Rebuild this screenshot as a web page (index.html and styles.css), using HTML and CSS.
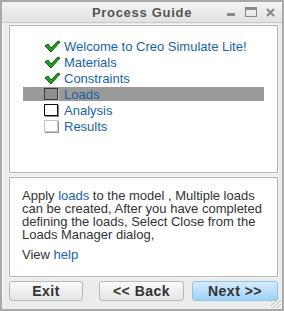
FILE: index.html
```html
<!DOCTYPE html>
<html lang="en">
<head>
  <meta charset="UTF-8" />
  <title>Process Guide</title>
  <link rel="stylesheet" href="styles.css">
</head>
<body>
  <div class="window">
    <div class="titlebar">
      <span class="title">Process Guide</span>
      <div class="controls">
        <svg class="ctl" width="10" height="10" viewBox="0 0 10 10"><rect x="1" y="6" width="8" height="3" fill="#8a8a8a"/></svg>
        <svg class="ctl" width="12" height="10" viewBox="0 0 12 10"><rect x="0.5" y="0.5" width="11" height="9" fill="none" stroke="#8a8a8a"/><rect x="0" y="0" width="12" height="3" fill="#8a8a8a"/></svg>
        <svg class="ctl" width="9" height="9" viewBox="0 0 9 9"><path d="M1 1 L8 8 M8 1 L1 8" stroke="#8a8a8a" stroke-width="2.2"/></svg>
      </div>
    </div>

    <div class="content">
      <div class="panel steps">
        <ul class="step-list">
          <li class="step"><svg class="mark" width="17" height="13" viewBox="0 0 17 13"><path d="M1 6 L4 4 L7 8 L14 1 L16 2 L7 12 Z" fill="#1fa01f" stroke="#0d5a0d" stroke-width="1"/></svg>Welcome to Creo Simulate Lite!</li>
          <li class="step"><svg class="mark" width="17" height="13" viewBox="0 0 17 13"><path d="M1 6 L4 4 L7 8 L14 1 L16 2 L7 12 Z" fill="#1fa01f" stroke="#0d5a0d" stroke-width="1"/></svg>Materials</li>
          <li class="step"><svg class="mark" width="17" height="13" viewBox="0 0 17 13"><path d="M1 6 L4 4 L7 8 L14 1 L16 2 L7 12 Z" fill="#1fa01f" stroke="#0d5a0d" stroke-width="1"/></svg>Constraints</li>
          <li class="step current"><span class="box active"></span>Loads</li>
          <li class="step"><span class="box next"></span>Analysis</li>
          <li class="step"><span class="box todo"></span>Results</li>
        </ul>
      </div>

      <div class="panel info">
        <p>Apply <a href="#">loads</a> to the model , Multiple loads can be created, After you have completed defining the loads, Select Close from the Loads Manager dialog,</p>
        <p>View <a href="#">help</a></p>
      </div>

      <div class="buttons">
        <button class="btn exit">Exit</button>
        <button class="btn back">&lt;&lt; Back</button>
        <button class="btn primary">Next &gt;&gt;</button>
      </div>
    </div>
    <div class="grip"></div>
  </div>
</body>
</html>
```

FILE: styles.css
```css
body {
  margin: 0;
  font-family: "Liberation Sans", Arial, sans-serif;
}

.window {
  position: relative;
  width: 284px;
  height: 311px;
  box-sizing: border-box;
  border: 2px solid #a9a9a9;
  background: #ececec;
}

.titlebar {
  height: 20px;
  display: flex;
  align-items: center;
  justify-content: center;
  background: linear-gradient(#f4f4f4, #e2e2e2);
  border-bottom: 1px solid #c8c8c8;
  position: relative;
}

.title {
  font-weight: bold;
  font-size: 13px;
  letter-spacing: 0.7px;
  color: #555;
}

.controls {
  position: absolute;
  right: 7px;
  top: 5px;
  display: flex;
  gap: 9px;
  align-items: flex-end;
}

.content {
  padding: 2px 4px 0 6px;
  border-left: 1px solid #f8f8f8;
}

.panel {
  background: #fff;
  border: 1px solid #b4b4b4;
  box-shadow: 0 0 0 1px #f6f6f6;
}

.steps {
  height: 146px;
  margin-bottom: 4px;
}

.step-list {
  list-style: none;
  margin: 12px 0 0;
  padding: 0;
}

.step {
  height: 16px;
  display: flex;
  align-items: center;
  margin: 0 13px;
  padding-left: 21px;
  font-size: 13px;
  color: #1763a6;
  white-space: nowrap;
}

.step.current {
  height: 14px;
  margin: 1px 13px;
  background: #9a9a9a;
}

.mark {
  flex: none;
  margin-right: 3px;
}

.box {
  flex: none;
  width: 14px;
  height: 12px;
  margin-right: 6px;
  box-sizing: border-box;
}

.box.active {
  border: 1px solid #3a3a3a;
  background: #8f8f8f;
  box-shadow: 1px 1px 0 #bdbdbd;
}

.box.next {
  border: 1px solid #111;
  background: #fff;
  box-shadow: 1px 1px 0 #8a8a8a;
}

.box.todo {
  border: 1px solid #c4c4c4;
  background: #fff;
  box-shadow: 1px 1px 0 #9a9a9a;
}

.info {
  height: 100px;
  box-sizing: border-box;
  padding: 11px 12px 0;
  font-size: 13px;
  line-height: 13px;
  color: #333;
}

.info p {
  margin: 0 0 7px;
}

.info a {
  color: #1763a6;
  text-decoration: none;
}

.buttons {
  display: flex;
  justify-content: space-between;
  margin-top: 4px;
}

.btn {
  height: 20px;
  border: 1px solid #b8b8b8;
  border-radius: 3px;
  background: linear-gradient(#fafafa, #e4e4e4);
  font-family: "Liberation Sans", Arial, sans-serif;
  font-weight: bold;
  font-size: 14px;
  letter-spacing: 0.5px;
  color: #333;
  padding: 0;
}

.exit {
  width: 74px;
}

.back {
  width: 85px;
  margin-left: 16px;
}

.primary {
  width: 86px;
  margin-left: 8px;
  border-color: #8cc4ec;
  background: linear-gradient(#d6ecfc, #9ed2f6);
}

.grip {
  position: absolute;
  right: 1px;
  bottom: 1px;
  width: 10px;
  height: 10px;
  background: repeating-linear-gradient(135deg, transparent 0 2px, #c4c4c4 2px 3px);
}
```
